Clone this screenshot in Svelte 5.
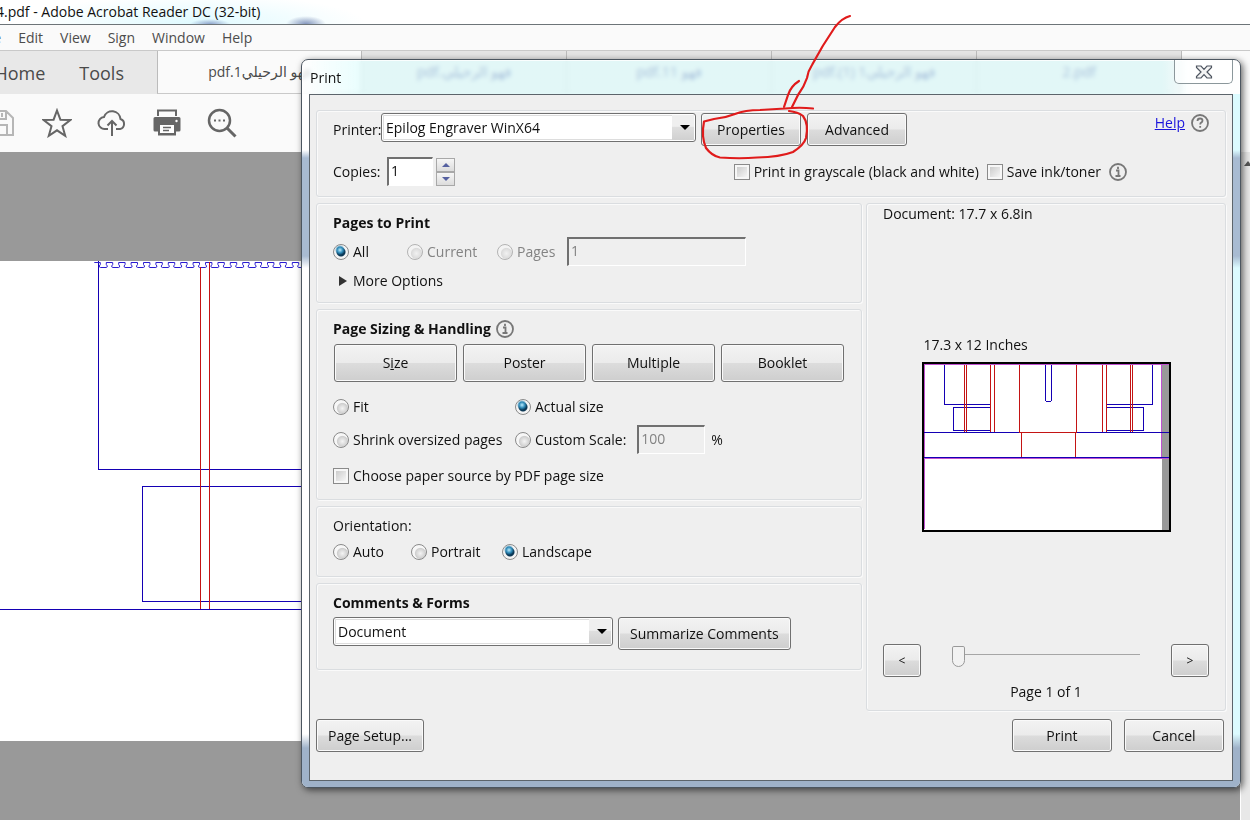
<script lang="ts">
	interface Tab {
		name: string;
		dir: 'rtl' | 'ltr';
	}

	const menus = ['File', 'Edit', 'View', 'Sign', 'Window', 'Help'];

	const tabs: Tab[] = [
		{ name: 'فهو الرحيلي1.pdf', dir: 'rtl' },
		{ name: 'فهو الرحيلي.pdf', dir: 'rtl' },
		{ name: 'فهو 11.pdf', dir: 'rtl' },
		{ name: 'فهو الرحيلي1 (1).pdf', dir: 'rtl' },
		{ name: '2.pdf', dir: 'ltr' }
	];

	let printer = $state('Epilog Engraver WinX64');
	let copies = $state('1');
	let grayscale = $state(false);
	let saveInk = $state(false);
	let range = $state('all');
	let pageRange = $state('1');
	let sizing = $state('actual');
	let scale = $state('100');
	let paperSource = $state(false);
	let orientation = $state('landscape');
	let comments = $state('Document');
	let page = $state(1);

	// joint teeth along the top edge of the cut sheet
	const teeth = Array.from({ length: 17 }, (_, i) => {
		const x = 103.3 + i * 12.4;
		return `M${x - 9} 1.5h6v2l-1 1.5q0 1.5 1 1.5h6q1 0 1-1.5l-1-1.5v-2h1`;
	}).join('');

	function stepCopies(delta: number): void {
		copies = String(Math.max(1, Number(copies) + delta));
	}
</script>

{#snippet info(glyph: string)}
	<svg class="info" viewBox="0 0 18 18" aria-hidden="true">
		<circle cx="9" cy="9" r="8" fill="none" stroke="#777" stroke-width="1.8" />
		{#if glyph === 'i'}
			<path d="M7 7.500h2.500v5.500M6.500 13h5M9 3.800v2.200" fill="none" stroke="#777" stroke-width="1.800" />
		{:else}
			<path d="M6.500 7q0-2.500 2.500-2.500t2.500 2.200q0 1.200-1.300 1.900-1 .6-1 1.900M9.200 12v1.800" fill="none" stroke="#777" stroke-width="1.800" />
		{/if}
	</svg>
{/snippet}

<div class="app">
	<header class="titlebar">4.pdf - Adobe Acrobat Reader DC (32-bit)</header>

	<nav class="menubar">
		{#each menus as menu}
			<button class="menu">{menu}</button>
		{/each}
	</nav>

	<div class="tabbar">
		<div class="sections">
			<button>Home</button>
			<button>Tools</button>
		</div>
		{#each tabs as tab, i}
			<button class="tab" class:active={i === 0} dir={tab.dir}>{tab.name}</button>
		{/each}
	</div>

	<div class="toolbar">
		<button aria-label="Save" class="dim">
			<svg viewBox="0 0 30 30"><path d="M2 3h17l7 7v17H2zM6 3v8h13V4M6 27v-10h14v10M15 5v4" /></svg>
		</button>
		<button aria-label="Star">
			<svg viewBox="0 0 30 30"><path d="M15 2.500l3.400 9.200 9.900.3-7.800 6.200 2.700 9.600L15 22.300l-8.200 5.500 2.700-9.600L1.700 12l9.900-.3z" /></svg>
		</button>
		<button aria-label="Upload">
			<svg viewBox="0 0 30 30"><path d="M11 21H8a6 6 0 0 1-1-12 8.500 8.500 0 0 1 16.500 2A5.200 5.200 0 0 1 23 21h-4M15 28V13M10.500 17.500L15 13l4.500 4.500" /></svg>
		</button>
		<button aria-label="Print file">
			<svg viewBox="0 0 30 30">
				<path d="M6 8V2.500h18V8" />
				<path d="M3 9h24a1.500 1.500 0 0 1 1.500 1.500V22a1.500 1.500 0 0 1-1.500 1.500h-3v4H6v-4H3A1.500 1.500 0 0 1 1.500 22V10.500A1.500 1.500 0 0 1 3 9z" fill="#666" stroke="none" />
				<path d="M8 17h14v8H8z" fill="#fff" stroke="none" />
				<path d="M11 19.500h8M11 22.500h6" stroke-width="1.500" />
				<circle cx="24.500" cy="13" r="1.200" fill="#fff" stroke="none" />
			</svg>
		</button>
		<button aria-label="Find">
			<svg viewBox="0 0 30 30">
				<circle cx="12.500" cy="12.500" r="10.500" stroke-width="2.500" />
				<path d="M20 20l8.500 8.500" stroke-width="3" />
				<path d="M7 12.500h2M11.500 12.500h2M16 12.500h2" />
			</svg>
		</button>
	</div>

	<main class="workspace">
		<div class="canvas">
			<div class="sheet">
				<svg width="620" height="480" fill="none" shape-rendering="crispEdges" aria-hidden="true">
					<path d="M98.500 0V208.500H620M620 225.500H142.500V340.500H620M0 348.500H620" stroke="#1400b4" />
					<path d={teeth} stroke="#2a1cd0" shape-rendering="auto" />
					<path d="M200.500 6V348M209.500 1V348" stroke="#c41414" />
				</svg>
			</div>
		</div>
		<aside class="pane"><span></span></aside>
	</main>

	<div class="dialog" role="dialog" aria-labelledby="dialog-title">
		<div class="dialog-title">
			<h1 id="dialog-title">Print</h1>
			<button class="close" aria-label="Close">
				<svg viewBox="0 0 18 14"><path d="M1.500 1h4.500l3 3.300L12 1h4.500v1.500L12 7l4.500 4.500V13H12L9 9.700 6 13H1.500v-1.500L6 7 1.500 2.500z" /></svg>
			</button>
		</div>

		<div class="dialog-body">
			<section class="group printer-group">
				<div class="printer-row">
					<label class="caption" for="printer">Printer:</label>
					<span class="dropdown printer">
						<select id="printer" bind:value={printer}>
							<option>Epilog Engraver WinX64</option>
						</select>
					</span>
					<span class="marked">
						<button class="btn wide">Properties</button>
						<svg class="scribble" width="170" height="160" viewBox="690 5 170 160" aria-hidden="true">
							<path d="M850 16Q842 18 835 27Q822 46 812 65Q808 71 807 78Q804 87 798 95L792 107M799 81Q791 86 788 95L784 107" />
							<path d="M813 108.500Q800 107 785 108.500L760 110Q745 110 735 114Q725 118 714 119L704 121.500Q701 137 706 148Q712 156 720 157.500Q740 159 757 157.500Q780 157 793 152Q804 145 806 138Q809 124 803 116Q798 112 789 111" />
						</svg>
					</span>
					<button class="btn wide">Advanced</button>
					<span class="help">
						<a href="#help">Help</a>
						{@render info('?')}
					</span>
				</div>
				<div class="copies-row">
					<label class="caption" for="copies">Copies:</label>
					<input id="copies" class="field copies" bind:value={copies} />
					<span class="spin">
						<button aria-label="More copies" onclick={() => stepCopies(1)}></button>
						<button class="down" aria-label="Fewer copies" onclick={() => stepCopies(-1)}></button>
					</span>
					<span class="ink-options">
						<label><input type="checkbox" bind:checked={grayscale} />Print in grayscale (black and white)</label>
						<label><input type="checkbox" bind:checked={saveInk} />Save ink/toner</label>
						{@render info('i')}
					</span>
				</div>
			</section>

			<div class="columns">
				<div class="settings">
					<section class="group">
						<h2>Pages to Print</h2>
						<div class="range-row">
							<label><input type="radio" name="range" value="all" bind:group={range} />All</label>
							<label class="off"><input type="radio" name="range" value="current" bind:group={range} disabled />Current</label>
							<label class="off"><input type="radio" name="range" value="pages" bind:group={range} disabled />Pages</label>
							<input class="field range" aria-label="Page range" bind:value={pageRange} disabled />
						</div>
						<button class="more"><span></span>More Options</button>
					</section>

					<section class="group sizing">
						<h2>Page Sizing &amp; Handling {@render info('i')}</h2>
						<div class="modes">
							<button class="btn">S<u>i</u>ze</button>
							<button class="btn">Poster</button>
							<button class="btn">Multiple</button>
							<button class="btn">Booklet</button>
						</div>
						<div class="size-grid">
							<label><input type="radio" name="sizing" value="fit" bind:group={sizing} />Fit</label>
							<label><input type="radio" name="sizing" value="actual" bind:group={sizing} />Actual size</label>
							<label><input type="radio" name="sizing" value="shrink" bind:group={sizing} />Shrink oversized pages</label>
							<span class="scale-row">
								<label><input type="radio" name="sizing" value="custom" bind:group={sizing} />Custom Scale:</label>
								<input class="field scale" aria-label="Scale" bind:value={scale} disabled />
								%
							</span>
						</div>
						<label><input type="checkbox" bind:checked={paperSource} />Choose paper source by PDF page size</label>
					</section>

					<section class="group orientation">
						<p>Orientation:</p>
						<div class="orientation-row">
							<label><input type="radio" name="orientation" value="auto" bind:group={orientation} />Auto</label>
							<label><input type="radio" name="orientation" value="portrait" bind:group={orientation} />Portrait</label>
							<label><input type="radio" name="orientation" value="landscape" bind:group={orientation} />Landscape</label>
						</div>
					</section>

					<section class="group comments">
						<h2 id="comments-title">Comments &amp; Forms</h2>
						<div class="comments-row">
							<span class="dropdown comment-kind">
								<select aria-labelledby="comments-title" bind:value={comments}>
									<option>Document</option>
								</select>
							</span>
							<button class="btn">Summarize Comments</button>
						</div>
					</section>
				</div>

				<section class="group preview">
					<p>Document: 17.7 x 6.8in</p>
					<figure>
						<figcaption>17.3 x 12 Inches</figcaption>
						<svg width="249" height="170" fill="none" shape-rendering="crispEdges" aria-hidden="true">
							<rect x="1" y="1" width="247" height="168" fill="#fff" stroke="#000" stroke-width="2" />
							<path d="M240 2h7v166h-7z" fill="#999" />
							<path d="M2.500 167V2.500H247M239.500 3V96M2 96.500H247" stroke="#c050d0" />
							<path d="M22.500 3V42.500H68M184 42.500H230.500V3M68 45.500H31.500V68.500H68M184 45.500H221.500V68.500H184M2 70.500H97M155 70.500H247M2 95.500H247" stroke="#1400b4" />
							<path d="M123.500 3V37q0 3 3 3t3-3V3" stroke="#1400b4" />
							<path d="M42.500 3V70M44.500 3V70M68.500 3V70M72.500 3V70M97.500 3V70M154.500 3V70M180.500 3V70M184.500 3V70M208.500 3V70M210.500 3V70M97 70.500H155M99.500 71V95M153.500 71V95" stroke="#c41414" />
						</svg>
					</figure>
					<div class="pager">
						<button class="btn step">&lt;</button>
						<input type="range" aria-label="Page" min="1" max="2" bind:value={page} />
						<button class="btn step">&gt;</button>
					</div>
					<p class="page-count">Page 1 of 1</p>
				</section>
			</div>

			<footer>
				<button class="btn setup">Page Setup...</button>
				<span class="actions">
					<button class="btn wide">Print</button>
					<button class="btn wide">Cancel</button>
				</span>
			</footer>
		</div>
	</div>
</div>

<style>
	.app {
		position: relative;
		display: flex;
		flex-direction: column;
		min-height: 100vh;
		overflow: hidden;
		background: #fafafa;
		color: #111;
		font: 14px/20px "Open Sans", "Noto Sans", "DejaVu Sans", sans-serif;
	}

	button,
	input,
	select {
		font: inherit;
		color: inherit;
		margin: 0;
		box-sizing: border-box;
	}

	button {
		padding: 0;
		border: 0;
		background: none;
		white-space: nowrap;
	}

	h1,
	h2,
	p,
	figure {
		margin: 0;
		font-size: 14px;
		line-height: 20px;
	}

	h1 {
		font-weight: 400;
	}

	.titlebar {
		height: 24px;
		line-height: 24px;
		margin-left: -4px;
		border-bottom: 1px solid #6d7478;
		background:
			radial-gradient(ellipse 20px 8px at 310px 24px, #8496bd, transparent),
			radial-gradient(ellipse 20px 5px at 214px 24px, #8fa5cc, transparent),
			radial-gradient(ellipse 170px 30px at 200px 24px, #dffaff, transparent),
			#fff;
		white-space: nowrap;
	}

	.menubar {
		display: flex;
		gap: 17px;
		height: 25px;
		margin-left: -21px;
		border-bottom: 1px solid #c9c9c9;
		color: #4c4c4c;
	}

	.tabbar {
		display: flex;
		height: 43px;
		background: #fafafa;
	}

	.sections {
		display: flex;
		flex: 0 0 157px;
		min-width: 0;
		justify-content: flex-end;
		gap: 34px;
		box-sizing: border-box;
		padding-right: 33px;
		overflow: hidden;
		background: #e8e8e8;
		color: #4a4a4a;
		font-size: 18px;
	}

	.tab {
		flex: 0 0 205px;
		border-right: 1px solid #bbb;
		border-bottom: 1px solid #c9c9c9;
		background: #e4e4e4;
		color: #1c2c86;
	}

	.tab.active {
		background: #fafafa;
		border-left: 1px solid #bbb;
		color: #4a4a4a;
	}

	.toolbar {
		display: flex;
		align-items: center;
		gap: 25px;
		height: 58px;
		margin-left: -13px;
		background: #fafafa;
	}

	.toolbar button {
		width: 30px;
		height: 30px;
	}

	.toolbar svg {
		display: block;
		fill: none;
		stroke: #666;
		stroke-width: 2;
	}

	.toolbar .dim {
		opacity: 0.45;
	}

	.workspace {
		display: flex;
		flex: 1;
	}

	.canvas {
		flex: 1;
		min-width: 0;
		background: #999;
		padding: 109px 0 79px;
		overflow: hidden;
	}

	.sheet {
		background: #fff;
	}

	.sheet svg {
		display: block;
	}

	.pane {
		flex: 0 0 9px;
		min-width: 0;
		overflow: hidden;
		border-left: 1px solid #fff;
		background: #e8e8e8;
	}

	.pane span {
		display: block;
		width: 0;
		margin: 9px 0 0 3px;
		border: 4px solid transparent;
		border-top: 0;
		border-bottom: 5px solid #555;
	}

	.dialog {
		position: absolute;
		left: 301px;
		right: 9px;
		top: 59px;
		padding: 0 7px 6px;
		border: 1px solid #4c5660;
		border-radius: 7px;
		background: linear-gradient(90deg, rgba(255, 255, 255, 0.8), rgba(225, 255, 255, 0.7) 60px, rgba(225, 255, 255, 0.7) 860px, rgba(255, 255, 255, 0.8) 890px);
		backdrop-filter: blur(2px);
		box-shadow: 2px 2px 7px rgba(0, 0, 0, 0.6), inset 0 0 0 1px rgba(255, 255, 255, 0.8);
	}

	/* glass frame below the caption */
	.dialog::before {
		content: '';
		position: absolute;
		inset: 34px 0 0;
		z-index: -1;
		border-radius: 0 0 6px 6px;
		background:
			linear-gradient(transparent 56px, #a8bbd2 64px, #a8bbd2 162px, transparent 174px, transparent 640px, #9fb2c9 654px),
			linear-gradient(90deg, #fff 50%, #dcfbff 50%);
	}

	.dialog-title {
		display: flex;
		justify-content: space-between;
		align-items: flex-start;
		height: 34px;
	}

	.dialog-title h1 {
		padding: 8px 0 0 1px;
	}

	.close {
		width: 59px;
		height: 24px;
		border: 1px solid #8b979b;
		border-top: 0;
		border-radius: 0 0 5px 5px;
		background: rgba(255, 255, 255, 0.6);
	}

	.close svg {
		width: 18px;
		height: 14px;
		display: block;
		margin: auto;
		fill: #f4f4f4;
		stroke: #4e5560;
		stroke-width: 1.2;
	}

	.dialog-body {
		border: 1px solid #5c646b;
		background: #efefef;
		padding: 15px 6px 28px;
	}

	.group {
		border: 1px solid #dadde0;
		border-radius: 3px;
		box-shadow: inset 1px 1px #fafafa, 1px 1px #fafafa;
		padding: 9px 16px 11px;
	}

	.printer-group {
		padding: 2px 16px 10px;
	}

	label {
		display: inline-flex;
		align-items: center;
		gap: 4px;
		white-space: nowrap;
	}

	.off {
		color: #838383;
	}

	.printer-row,
	.copies-row,
	.ink-options,
	.help,
	.range-row,
	.orientation-row,
	.scale-row,
	.comments-row {
		display: flex;
		align-items: center;
	}

	.printer-row {
		height: 33px;
	}

	.caption {
		flex: 0 0 48px;
		min-width: 0;
	}

	.dropdown {
		position: relative;
		align-self: flex-start;
		height: 29px;
	}

	.dropdown.printer {
		flex: 0 1 315px;
		margin-right: 5px;
	}

	.dropdown select {
		appearance: none;
		width: 100%;
		height: 29px;
		padding: 0 26px 0 4px;
		border: 1px solid #707070;
		border-radius: 3px;
		background: #fff;
		box-shadow: inset 0 0 0 1px #fff, inset 0 0 0 2px #ddd;
	}

	.dropdown::before {
		content: '';
		position: absolute;
		top: 2px;
		right: 2px;
		width: 22px;
		height: 25px;
		background: linear-gradient(#efefef 45%, #dedede 50%, #d0d0d0);
		pointer-events: none;
	}

	.dropdown::after {
		content: '';
		position: absolute;
		top: 12px;
		right: 6px;
		border: 5px solid transparent;
		border-top-color: #000;
		border-bottom: 0;
		pointer-events: none;
	}

	.btn {
		height: 33px;
		padding: 0 11px;
		border: 1px solid #707070;
		border-radius: 3px;
		background: linear-gradient(#f3f3f3, #ebebeb 49%, #dcdcdc 51%, #cecece);
		box-shadow: inset 0 0 0 1px #fafafa;
	}

	.btn.wide {
		width: 100px;
	}

	.marked {
		position: relative;
		margin-right: 6px;
	}

	.scribble {
		position: absolute;
		left: -11px;
		top: -108px;
		z-index: 1;
		fill: none;
		stroke: #e01b1b;
		stroke-width: 2.2;
		stroke-linecap: round;
		stroke-linejoin: round;
		pointer-events: none;
	}

	.help {
		align-self: flex-start;
		margin-left: auto;
		gap: 6px;
	}

	.help a {
		color: #1a14dc;
	}

	.info {
		width: 18px;
		height: 18px;
		flex: none;
	}

	.copies-row {
		margin-top: 11px;
	}

	.field {
		height: 29px;
		padding: 0 2px 4px;
		border: 1px solid #fff;
		border-top: 2px solid #707070;
		border-left: 2px solid #707070;
		border-radius: 0;
		background: #fff;
	}

	.field:disabled {
		background: transparent;
		color: #838383;
	}

	.copies {
		width: 46px;
		margin: 0 3px 0 6px;
	}

	.spin {
		display: grid;
	}

	.spin button {
		display: grid;
		place-items: center;
		width: 19px;
		height: 14px;
		border: 1px solid #a8a8a8;
		background: linear-gradient(#f6f6f6, #dcdcdc);
	}

	.spin button::before {
		content: '';
		border: 4px solid transparent;
		border-top: 0;
		border-bottom-color: #5560a0;
	}

	.spin .down::before {
		transform: rotate(180deg);
	}

	.ink-options {
		gap: 8px;
		margin-left: auto;
		padding-right: 82px;
	}

	input[type='checkbox'],
	input[type='radio'] {
		appearance: none;
		flex: none;
		width: 16px;
		height: 16px;
		border: 1px solid #8a8a8a;
		background: linear-gradient(135deg, #ccc, #f6f6f6) content-box, #f7f7f7;
		padding: 2px;
	}

	input[type='radio'] {
		border-radius: 50%;
		background: radial-gradient(circle at 60% 60%, #f4f4f4, #cfcfcf 5px, #f7f7f7 6px);
	}

	input[type='radio']:checked {
		background:
			radial-gradient(circle at 6px 5px, #b9ecff 0, #2a86b4 3px, transparent 5px),
			radial-gradient(circle, #0c3856 4px, #f4f4f4 5px);
	}

	input[type='radio']:disabled {
		opacity: 0.6;
	}

	.columns {
		display: flex;
		gap: 4px;
		margin-top: 6px;
	}

	.settings {
		display: flex;
		flex-direction: column;
		gap: 6px;
		flex: 1 1 546px;
		min-width: 0;
	}

	.range-row {
		display: grid;
		grid-template-columns: 74px 90px 70px 179px;
		margin: 4px 0 5px;
	}

	.more {
		display: flex;
		align-items: center;
		gap: 6px;
		padding-left: 6px;
		height: 20px;
	}

	.more span {
		border: 5px solid transparent;
		border-left: 8px solid #333;
		border-right: 0;
	}

	.sizing h2 {
		display: flex;
		align-items: center;
		gap: 5px;
	}

	.sizing {
		padding-bottom: 10px;
	}

	.modes {
		display: grid;
		grid-template-columns: repeat(4, 123px);
		gap: 6px;
		margin: 5px 0 15px 1px;
	}

	.modes .btn {
		height: 38px;
	}

	.size-grid {
		display: grid;
		grid-template-columns: 182px 1fr;
		grid-template-rows: 20px 29px;
		row-gap: 8px;
		margin-bottom: 12px;
	}

	.scale-row {
		gap: 6px;
	}

	.scale {
		width: 68px;
		margin-left: 5px;
	}

	.orientation {
		padding-bottom: 14px;
	}

	.orientation-row {
		display: grid;
		grid-template-columns: 78px 91px 1fr;
		margin-top: 6px;
	}

	.comments {
		padding-bottom: 19px;
	}

	.comments-row {
		gap: 5px;
		margin-top: 4px;
	}

	.comment-kind {
		flex: 0 0 280px;
	}

	.preview {
		display: flex;
		flex-direction: column;
		flex: 0 0 326px;
		padding: 0 16px 8px;
	}

	.preview figure {
		align-self: center;
		margin-top: 111px;
	}

	.preview figcaption {
		padding-left: 2px;
		margin-bottom: 7px;
	}

	.preview figure svg {
		display: block;
	}

	.pager {
		display: flex;
		align-items: center;
		justify-content: space-between;
		margin-top: 112px;
	}

	.btn.step {
		width: 38px;
		padding: 0;
		font-size: 12px;
	}

	.pager input {
		appearance: none;
		flex: 0 0 188px;
		height: 24px;
		align-self: flex-start;
		background: linear-gradient(#a6a6a6, #a6a6a6) 0 10px / 100% 1px no-repeat;
	}

	.pager input::-webkit-slider-thumb {
		appearance: none;
		width: 13px;
		height: 21px;
		border: 1px solid #999;
		border-radius: 2px 2px 7px 7px;
		background: #f2f2f2;
	}

	.page-count {
		margin-top: 5px;
		text-align: center;
	}

	footer {
		display: flex;
		justify-content: space-between;
		margin-top: 8px;
	}

	.actions {
		display: flex;
		gap: 12px;
		padding-right: 2px;
	}
</style>
